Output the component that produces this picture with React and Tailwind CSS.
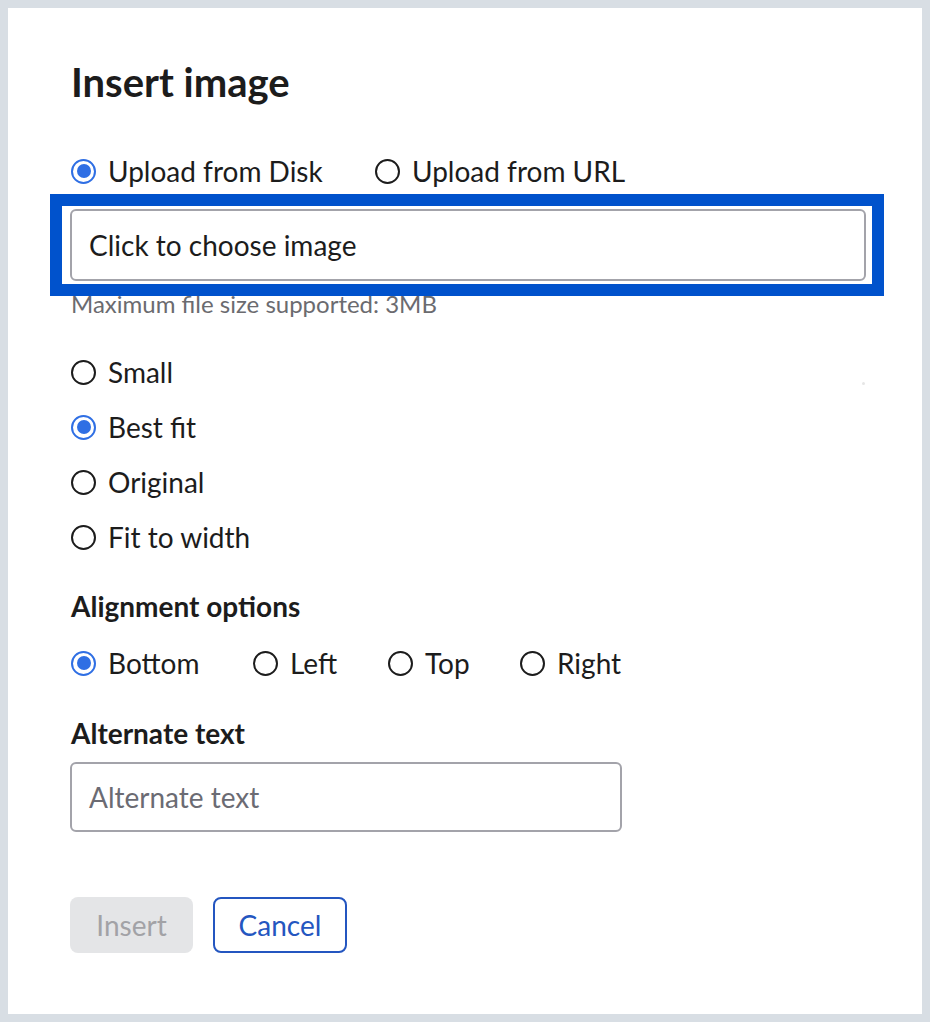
import React from 'react';

const SIZES = [
  { label: 'Small', checked: false },
  { label: 'Best fit', checked: true },
  { label: 'Original', checked: false },
  { label: 'Fit to width', checked: false },
];

const ALIGN = [
  { label: 'Bottom', checked: true, w: 'w-[182px]' },
  { label: 'Left', checked: false, w: 'w-[135px]' },
  { label: 'Top', checked: false, w: 'w-[132px]' },
  { label: 'Right', checked: false, w: '' },
];

function Radio({ checked, label, className = '' }) {
  return (
    <label className={`flex items-center gap-3 ${className}`}>
      {checked ? (
        <span className="w-[25px] h-[25px] rounded-full border-2 border-[#2f6fe4] flex items-center justify-center shrink-0">
          <span className="w-[14px] h-[14px] rounded-full bg-[#2f6fe4]" />
        </span>
      ) : (
        <span className="w-[25px] h-[25px] rounded-full border-2 border-[#1c1c1c] shrink-0" />
      )}
      <span>{label}</span>
    </label>
  );
}

export default function App() {
  return (
    <div className="min-h-screen bg-[#d8dee4] p-2" style={{ fontFamily: 'Lato, "Open Sans", sans-serif' }}>
      <div className="relative bg-white h-[1006px] px-[54px] text-[#1c1c1c] text-[28px] leading-none">
        <h1 className="pl-[9px] pt-[54px] text-[40px] font-bold leading-none">Insert image</h1>

        <div className="pl-[9px] mt-[55px] flex items-center">
          <Radio checked label="Upload from Disk" className="w-[304px]" />
          <Radio label="Upload from URL" />
        </div>

        {/* highlighted file picker */}
        <div className="-ml-[12px] mt-[9px] w-[834px] border-[12px] border-[#0052cc] pl-[8px] pr-[6px] pt-[3px] pb-[3px]">
          <div className="h-[72px] rounded-md border-2 border-[#a3a3aa] flex items-center px-[17px]">
            Click to choose image
          </div>
        </div>

        <p className="pl-[9px] -mt-[4px] text-[24px] text-[#6b6b6f]">Maximum file size supported: 3MB</p>

        <div className="pl-[9px] mt-[42px] flex flex-col gap-[27px]">
          {SIZES.map((s) => (
            <Radio key={s.label} checked={s.checked} label={s.label} />
          ))}
        </div>

        <h2 className="pl-[9px] mt-[41px] text-[28px] font-bold">Alignment options</h2>

        <div className="pl-[9px] mt-[29px] flex items-center">
          {ALIGN.map((a) => (
            <Radio key={a.label} checked={a.checked} label={a.label} className={a.w} />
          ))}
        </div>

        <h2 className="pl-[9px] mt-[42px] text-[28px] font-bold">Alternate text</h2>

        <div className="ml-[8px] mt-[15px] w-[552px] h-[70px] rounded-md border-2 border-[#a3a3aa] flex items-center px-[17px] text-[#6b6b73]">
          Alternate text
        </div>

        <div className="ml-[8px] mt-[65px] flex gap-5">
          <button className="w-[123px] h-[56px] rounded-lg bg-[#e4e5e7] text-[#a2a2a6]">Insert</button>
          <button className="w-[134px] h-[56px] rounded-lg border-2 border-[#2456c0] text-[#2456c0]">Cancel</button>
        </div>

        <span className="absolute left-[854px] top-[374px] w-[3px] h-[3px] rounded-full bg-[#e6e6e6]" />
      </div>
    </div>
  );
}
